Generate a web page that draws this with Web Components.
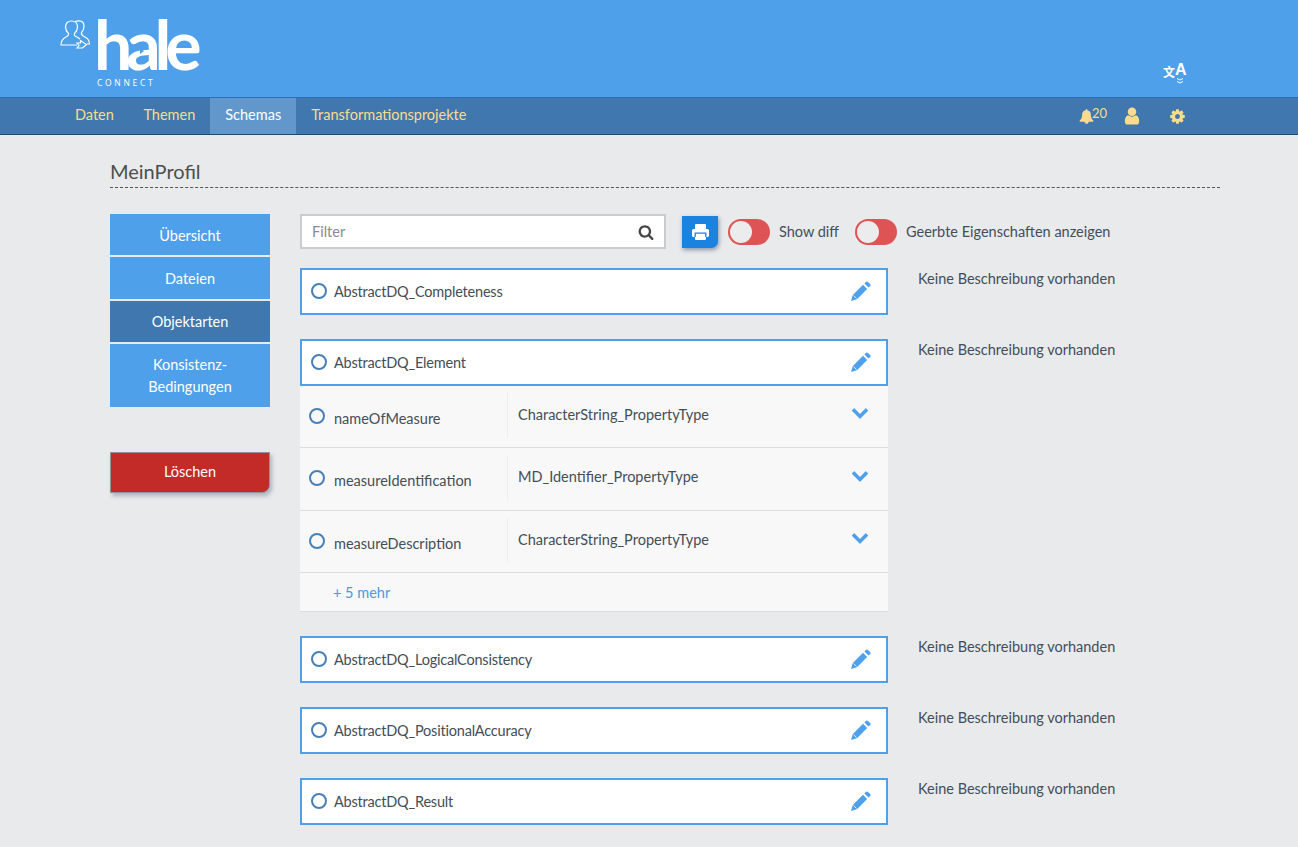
<!DOCTYPE html>
<html>
<head>
<meta charset="utf-8">
<title>hale connect</title>
<style>
  html, body { margin: 0; padding: 0; }
  body {
    background: #e9eaec;
    color: #444e57;
    font-family: Lato, "Open Sans", sans-serif;
    font-size: 14.5px;
    height: 847px;
    overflow: hidden;
  }
</style>
</head>
<body>
<app-header></app-header>
<app-nav></app-nav>
<profile-page>
  <side-menu slot="side"></side-menu>
  <tool-bar></tool-bar>
  <type-row name="AbstractDQ_Completeness"></type-row>
  <type-row name="AbstractDQ_Element">
    <prop-row name="nameOfMeasure" type="CharacterString_PropertyType"></prop-row>
    <prop-row name="measureIdentification" type="MD_Identifier_PropertyType"></prop-row>
    <prop-row name="measureDescription" type="CharacterString_PropertyType"></prop-row>
    <more-row>+ 5 mehr</more-row>
  </type-row>
  <type-row name="AbstractDQ_LogicalConsistency"></type-row>
  <type-row name="AbstractDQ_PositionalAccuracy"></type-row>
  <type-row name="AbstractDQ_Result"></type-row>
</profile-page>

<script>
const ICONS = {
  bell: 'M912 1696q0-16-16-16-59 0-101.5-42.5t-42.5-101.5q0-16-16-16t-16 16q0 73 51.5 124.5t124.5 51.5q16 0 16-16zm816-288q0 52-38 90t-90 38h-448q0 106-75 181t-181 75-181-75-75-181h-448q-52 0-90-38t-38-90q50-42 91-88t85-119.5 74.5-158.5 50-206 19.5-260q0-152 117-282.5t307-158.5q-8-19-8-39 0-40 28-68t68-28 68 28 28 68q0 20-8 39 190 28 307 158.5t117 282.5q0 139 19.5 260t50 206 74.5 158.5 85 119.5 91 88z',
  user: 'M1536 1399q0 109-62.5 187t-150.5 78h-854q-88 0-150.5-78t-62.5-187q0-85 8.5-160.5t31.5-152 58.5-131 94-89 134.5-34.5q131 128 313 128t313-128q76 0 134.5 34.5t94 89 58.5 131 31.5 152 8.5 160.5zm-256-887q0 159-112.5 271.5t-271.5 112.5-271.5-112.5-112.5-271.5 112.5-271.5 271.5-112.5 271.5 112.5 112.5 271.5z',
  cog: 'M1152 896q0-106-75-181t-181-75-181 75-75 181 75 181 181 75 181-75 75-181zm512-109v222q0 12-8 23t-20 13l-185 28q-19 54-39 91 35 50 107 138 10 12 10 25t-9 23q-27 37-99 108t-94 71q-12 0-26-9l-138-108q-44 23-91 38-16 136-29 186-7 28-36 28h-222q-14 0-24.5-8.5t-11.5-21.5l-28-184q-49-16-90-37l-141 107q-10 9-25 9-14 0-25-11-126-114-165-168-7-10-7-23 0-12 8-23 15-21 51-66.5t54-70.5q-27-50-41-99l-183-27q-13-2-21-12.5t-8-23.5v-222q0-12 8-23t19-13l186-28q14-46 39-92-40-57-107-138-10-12-10-24 0-10 9-23 26-36 98.5-107.5t94.5-71.5q13 0 26 10l138 107q44-23 91-38 16-136 29-186 7-28 36-28h222q14 0 24.5 8.5t11.5 21.5l28 184q49 16 90 37l142-107q9-9 24-9 13 0 25 10 129 119 165 170 7 8 7 22 0 12-8 23-15 21-51 66.5t-54 70.5q26 50 41 98l183 28q13 2 21 12.5t8 23.5z',
  search: 'M1216 832q0-185-131.5-316.5t-316.5-131.5-316.5 131.5-131.5 316.5 131.5 316.5 316.5 131.5 316.5-131.5 131.5-316.5zm512 832q0 52-38 90t-90 38q-54 0-90-38l-343-342q-179 124-399 124-143 0-273.5-55.5t-225-150-150-225-55.5-273.5 55.5-273.5 150-225 225-150 273.5-55.5 273.5 55.5 225 150 150 225 55.5 273.5q0 220-124 399l343 343q37 37 37 90z',
  chevron: 'M1683 808l-742 741q-19 19-45 19t-45-19l-742-741q-19-19-19-45.5t19-45.5l166-165q19-19 45-19t45 19l531 531 531-531q19-19 45-19t45 19l166 165q19 19 19 45.5t-19 45.5z'
};

class FaIcon extends HTMLElement {
  connectedCallback() {
    const size = this.getAttribute('size') || 16;
    const shadow = this.attachShadow({mode: 'open'});
    shadow.innerHTML = `
      <style>
        :host { display: inline-flex; line-height: 0; }
        svg { fill: currentColor; }
      </style>
      <svg width="${size}" height="${size}" viewBox="0 0 1792 1792"><path d="${ICONS[this.getAttribute('name')]}"/></svg>
    `;
  }
}
customElements.define('fa-icon', FaIcon);

class AppHeader extends HTMLElement {
  constructor() {
    super();
    const shadow = this.attachShadow({mode: 'open'});
    shadow.innerHTML = `
      <style>
        :host {
          display: flex;
          justify-content: space-between;
          height: 97px;
          background: #4fa0ea;
          border-bottom: 1px solid #2b6fae;
          color: #fff;
          padding: 0 112px 0 60px;
        }
        .logo { display: flex; align-items: flex-start; }
        .people { margin-top: 20px; flex: none; }
        .words { margin-left: 2px; display: flex; flex-direction: column; position: relative; }
        .hale {
          font-family: Lato, sans-serif;
          font-weight: 700;
          font-size: 68px;
          line-height: normal;
          letter-spacing: -6.2px;
          margin-top: 3px;
        }
        .arrow { position: absolute; left: 41px; top: 47px; }
        .connect {
          font-family: "Open Sans", sans-serif;
          font-size: 8.5px;
          line-height: 10px;
          letter-spacing: 2.7px;
          margin-top: -6px;
          margin-left: 3px;
        }
        .lang {
          align-self: flex-start;
          margin-top: 61px;
          width: 23px;
          display: grid;
          grid-template-columns: 12px 11px;
        }
        .zh { font-family: "Noto Sans CJK SC", sans-serif; font-size: 12px; font-weight: 700; line-height: 22px; }
        .a { font-family: "Liberation Sans", sans-serif; font-weight: 700; font-size: 16px; line-height: 17px; }
        .lang svg { grid-column: 2; margin-top: -5px; }
      </style>
      <div class="logo">
        <svg class="people" width="32" height="30" viewBox="0 0 32 30" fill="none" stroke="#fff" stroke-width="1.2">
          <path d="M17 25H1C1 20 3 18.500 6 17C8 16 9 15.500 8.500 13.500C6.500 11.500 5.500 9 5.500 7C5.500 3 8 1 11.500 1C15 1 17.500 3 17.500 7C17.500 9 16.500 11.500 14.500 13.500C14 15.500 15 16.500 17 17L20 19"/>
          <path d="M15 1.500C16.500.8 18 .8 19 .8C22 .8 24 3 24 6.500C24 9 23 11 21.500 12.500C21 14.500 22 15.500 24 16.500C27.500 18 29.500 20 29.500 24H27"/>
          <path d="M17 23h3.500v-2.500l6 4-4 3.500h-5.500l2-2.500z"/>
        </svg>
        <div class="words">
          <span class="hale">hale</span>
          <svg class="arrow" width="10" height="8" viewBox="0 0 10 8" fill="#4fa0ea"><path d="M0 0l4 4-4 0zM5 1l4 3-4 3z"/></svg>
          <span class="connect">CONNECT</span>
        </div>
      </div>
      <div class="lang">
        <span class="zh">文</span><span class="a">A</span>
        <svg width="10" height="6" viewBox="0 0 10 6" fill="none" stroke="#fff" stroke-width="1"><path d="M2 .5l3 1.500 3-1.500M2 3.500l3 1.500 3-1.500"/></svg>
      </div>
    `;
  }
}
customElements.define('app-header', AppHeader);

class AppNav extends HTMLElement {
  constructor() {
    super();
    const shadow = this.attachShadow({mode: 'open'});
    shadow.innerHTML = `
      <style>
        :host {
          display: flex;
          justify-content: space-between;
          height: 36px;
          background: #3f77ae;
          border-bottom: 1px solid #1f4a73;
          padding: 0 112px 0 60px;
          color: #fbdc8c;
        }
        .tabs, .tools { display: flex; align-items: stretch; }
        .tab { display: flex; align-items: center; padding: 0 15px 3px; }
        .tab:first-child { padding-right: 14.5px; }
        .tab.on { background: #6297cb; color: #fff; }
        .tools { align-items: center; }
        .bell { display: flex; align-items: flex-start; margin-right: 15px; }
        .bell span { font-size: 13px; line-height: 14px; margin-top: -3px; margin-left: -2px; }
        .cog { margin-left: 27px; }
      </style>
      <div class="tabs">
        <div class="tab">Daten</div>
        <div class="tab">Themen</div>
        <div class="tab on">Schemas</div>
        <div class="tab">Transformationsprojekte</div>
      </div>
      <div class="tools">
        <div class="bell"><fa-icon name="bell" size="15"></fa-icon><span>20</span></div>
        <fa-icon name="user" size="20"></fa-icon>
        <fa-icon class="cog" name="cog" size="17"></fa-icon>
      </div>
    `;
  }
}
customElements.define('app-nav', AppNav);

class ProfilePage extends HTMLElement {
  constructor() {
    super();
    const shadow = this.attachShadow({mode: 'open'});
    shadow.innerHTML = `
      <style>
        :host { display: block; padding: 22px 78px 0 110px; }
        h1 {
          margin: 0 0 26px;
          padding-bottom: 1px;
          font-size: 20px;
          font-weight: 400;
          line-height: 29px;
          color: #4b4f4f;
          border-bottom: 1px dashed #555;
        }
        .cols { display: flex; gap: 30px; }
        .side { width: 160px; flex: none; }
        .main { width: 920px; display: flex; flex-direction: column; }
      </style>
      <h1>MeinProfil</h1>
      <div class="cols">
        <div class="side"><slot name="side"></slot></div>
        <div class="main"><slot></slot></div>
      </div>
    `;
  }
}
customElements.define('profile-page', ProfilePage);

class SideMenu extends HTMLElement {
  constructor() {
    super();
    const shadow = this.attachShadow({mode: 'open'});
    shadow.innerHTML = `
      <style>
        :host { display: flex; flex-direction: column; gap: 2px; color: #fff; text-align: center; }
        div { background: #4fa0ea; padding: 10.5px 10px 9.5px; line-height: 21.33px; }
        .on { background: #3f77ae; }
        .del {
          margin-top: 43.33px;
          line-height: 18.7px;
          background: #c22b27;
          border: 1px solid #8f959b;
          border-bottom-right-radius: 8px;
          box-shadow: 2px 3px 4px rgba(60, 80, 110, .35);
        }
      </style>
      <div>Übersicht</div>
      <div>Dateien</div>
      <div class="on">Objektarten</div>
      <div>Konsistenz-<br>Bedingungen</div>
      <div class="del">Löschen</div>
    `;
  }
}
customElements.define('side-menu', SideMenu);

class ToggleSwitch extends HTMLElement {
  constructor() {
    super();
    const shadow = this.attachShadow({mode: 'open'});
    shadow.innerHTML = `
      <style>
        :host { display: inline-flex; align-items: center; gap: 9px; white-space: nowrap; }
        .track {
          width: 42px;
          height: 26px;
          box-sizing: border-box;
          border-radius: 13px;
          background: #de5454;
          padding: 2px;
        }
        .knob { width: 22px; height: 22px; border-radius: 50%; background: #ececec; }
      </style>
      <span class="track"><div class="knob"></div></span>
      <slot></slot>
    `;
  }
}
customElements.define('toggle-switch', ToggleSwitch);

class ToolBar extends HTMLElement {
  constructor() {
    super();
    const shadow = this.attachShadow({mode: 'open'});
    shadow.innerHTML = `
      <style>
        :host { display: flex; align-items: center; height: 35px; margin-bottom: 19px; }
        .filter {
          flex: none;
          width: 366px;
          height: 35px;
          box-sizing: border-box;
          border: 2px solid #ccc;
          background: #fff;
          display: flex;
          align-items: center;
          justify-content: space-between;
          padding: 0 10px;
          color: #8b8b8b;
        }
        .filter span { padding-bottom: 1px; }
        .filter fa-icon { color: #444; }
        .print {
          flex: none;
          margin-left: 16px;
          width: 36px;
          height: 32px;
          background: #1c82e0;
          display: flex;
          align-items: center;
          justify-content: center;
          border-bottom-right-radius: 7px;
          box-shadow: 1px 2px 4px rgba(40, 70, 110, .5);
        }
        toggle-switch { margin-left: 10px; }
        toggle-switch + toggle-switch { margin-left: 16px; }
      </style>
      <div class="filter"><span>Filter</span><fa-icon name="search" size="16"></fa-icon></div>
      <div class="print">
        <svg width="17" height="16" viewBox="0 0 17 16">
          <path fill="#fff" d="M4 0h9a1 1 0 0 1 1 1v4h1.500a1.500 1.500 0 0 1 1.500 1.500v5a1.500 1.500 0 0 1-1.500 1.500H14v2a1 1 0 0 1-1 1H4a1 1 0 0 1-1-1v-2H1.500A1.500 1.500 0 0 1 0 11.500v-5A1.500 1.500 0 0 1 1.500 5H3V1a1 1 0 0 1 1-1z"/>
          <path fill="none" stroke="#1c82e0" stroke-width="1.300" d="M3.200 13V9.200h10.600V13"/>
        </svg>
      </div>
      <toggle-switch>Show diff</toggle-switch>
      <toggle-switch>Geerbte Eigenschaften anzeigen</toggle-switch>
    `;
  }
}
customElements.define('tool-bar', ToolBar);

class TypeRow extends HTMLElement {
  connectedCallback() {
    const shadow = this.attachShadow({mode: 'open'});
    shadow.innerHTML = `
      <style>
        :host { display: grid; grid-template-columns: 588px 1fr; grid-template-rows: auto auto; column-gap: 30px; margin-bottom: 24.5px; }
        .card {
          height: 46.5px;
          box-sizing: border-box;
          border: 2px solid #4fa0ea;
          background: #fff;
          display: flex;
          align-items: center;
          padding: 0 15px 0 9px;
        }
        .dot {
          width: 16px;
          height: 16px;
          box-sizing: border-box;
          border: 2px solid #4a7fb5;
          border-radius: 50%;
          margin-right: 7px;
        }
        .name { flex: 1; letter-spacing: -.2px; }
        .card svg { fill: #4fa0ea; flex: none; }
        .desc { line-height: 20px; padding-top: 1px; }
        .sub { grid-column: 1; }
      </style>
      <div class="card">
        <span class="dot"></span>
        <span class="name">${this.getAttribute('name')}</span>
        <svg width="20" height="20" viewBox="0 0 20 20">
          <path d="M0 20l1.800-6L12 3.800 16.200 8 6 18.200z"/>
          <path d="M13.400 2.400l1.500-1.500a1.500 1.500 0 0 1 2.100 0l2.100 2.100a1.500 1.500 0 0 1 0 2.100l-1.500 1.500z"/>
          <path fill="none" stroke="#fff" stroke-width=".8" d="M2.500 14.500l3 3"/>
        </svg>
      </div>
      <div class="desc">Keine Beschreibung vorhanden</div>
      <div class="sub"><slot></slot></div>
    `;
  }
}
customElements.define('type-row', TypeRow);

class PropRow extends HTMLElement {
  connectedCallback() {
    const shadow = this.attachShadow({mode: 'open'});
    shadow.innerHTML = `
      <style>
        :host {
          display: flex;
          height: 62.5px;
          box-sizing: border-box;
          background: #f8f8f8;
          border-bottom: 1px solid #ddd;
        }
        .left {
          width: 208px;
          box-sizing: border-box;
          display: flex;
          align-items: center;
          gap: 9px;
          padding-left: 9px;
          margin: 7.5px 0 9px;
          border-right: 1px solid #eee;
        }
        .left span:last-child { padding-top: 5px; }
        .dot {
          width: 16px;
          height: 16px;
          box-sizing: border-box;
          border: 2px solid #4a7fb5;
          border-radius: 50%;
        }
        .right {
          flex: 1;
          display: flex;
          align-items: center;
          justify-content: space-between;
          padding: 0 19px 0 10px;
        }
        .right span { padding-bottom: 4px; }
        fa-icon { color: #4fa0ea; margin-bottom: 8px; }
      </style>
      <div class="left"><span class="dot"></span><span>${this.getAttribute('name')}</span></div>
      <div class="right"><span>${this.getAttribute('type')}</span><fa-icon name="chevron" size="18"></fa-icon></div>
    `;
  }
}
customElements.define('prop-row', PropRow);

class MoreRow extends HTMLElement {
  constructor() {
    super();
    const shadow = this.attachShadow({mode: 'open'});
    shadow.innerHTML = `
      <style>
        :host {
          display: flex;
          align-items: center;
          height: 38.5px;
          box-sizing: border-box;
          padding: 1px 0 0 33px;
          background: #f8f8f8;
          border-bottom: 1px solid #ddd;
          color: #4f97dd;
        }
      </style>
      <slot></slot>
    `;
  }
}
customElements.define('more-row', MoreRow);
</script>
</body>
</html>
